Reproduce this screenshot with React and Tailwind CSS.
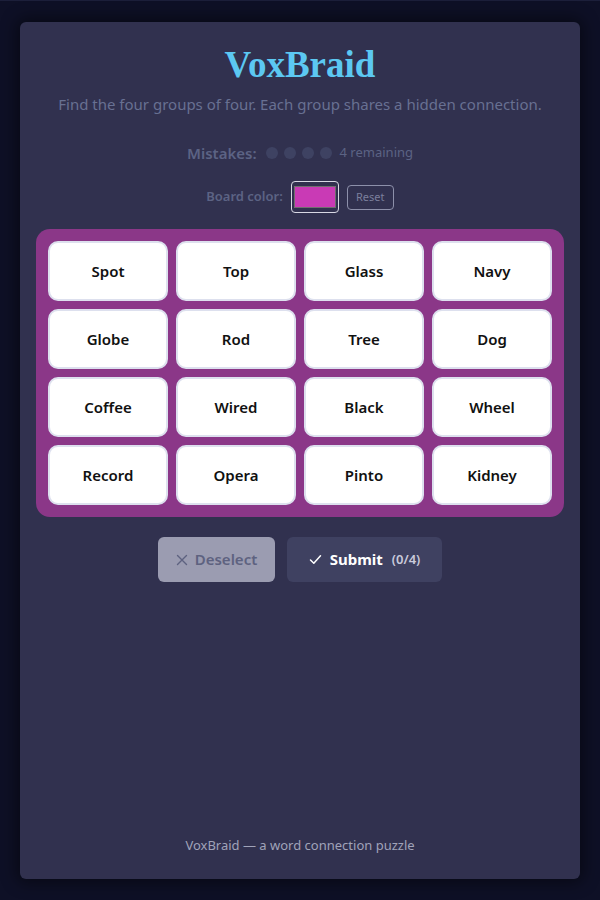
import React from "react";

const WORDS = [
  "Spot", "Top", "Glass", "Navy",
  "Globe", "Rod", "Tree", "Dog",
  "Coffee", "Wired", "Black", "Wheel",
  "Record", "Opera", "Pinto", "Kidney",
];

const sans = { fontFamily: '"Noto Sans", "Open Sans", sans-serif' };

export default function App() {
  return (
    <div className="min-h-[900px] bg-[#0e1026] p-5 pt-[21px] border-t border-[#1c1f3a]" style={sans}>
      <div className="h-[857px] rounded-md bg-[#31314f] shadow-[0_0_16px_4px_rgba(0,0,0,0.45)] flex flex-col items-center px-4 pt-[21px] pb-[24px]">
        <h1
          className="text-[37px] leading-[44px] font-bold text-[#5cc8f2]"
          style={{ fontFamily: '"Liberation Serif", "DejaVu Serif", serif' }}
        >
          VoxBraid
        </h1>
        <p className="mt-[6px] text-[15px] leading-[22px] text-[#687092]">
          Find the four groups of four. Each group shares a hidden connection.
        </p>

        <div className="mt-[28px] flex items-center h-[20px]">
          <span className="text-[15px] font-semibold text-[#5c6384]">Mistakes:</span>
          <div className="ml-[9px] flex gap-[6px]">
            {[0, 1, 2, 3].map((i) => (
              <span key={i} className="w-[12px] h-[12px] rounded-full bg-[#3e4262]" />
            ))}
          </div>
          <span className="ml-[8px] text-[13px] text-[#5c6384]">4 remaining</span>
        </div>

        <div className="mt-[18px] flex items-center h-[32px]">
          <span className="text-[13px] font-semibold text-[#5c6384]">Board color:</span>
          <div className="ml-[8px] w-[48px] h-[32px] rounded-[4px] border border-[#d8d8e4] flex items-center justify-center">
            <div className="w-[42px] h-[22px] bg-[#c93ab5] border border-[#6f6f6f]" />
          </div>
          <button className="ml-[8px] w-[47px] h-[25px] rounded-[4px] border border-[#8d90aa] text-[11px] text-[#7b7f9c]">
            Reset
          </button>
        </div>

        <div className="mt-[16px] w-[528px] rounded-[14px] bg-[#8b3788] p-3 grid grid-cols-4 gap-2">
          {WORDS.map((w) => (
            <button
              key={w}
              className="h-[60px] rounded-[10px] bg-white border-2 border-[#dde0ee] text-[15px] font-semibold text-[#111]"
            >
              {w}
            </button>
          ))}
        </div>

        <div className="mt-[20px] flex gap-3">
          <button className="w-[117px] h-[45px] rounded-[6px] bg-[#9b9cb1] flex items-center justify-center gap-[7px] text-[15px] font-semibold text-[#5e6280]">
            <svg width="12" height="12" viewBox="0 0 12 12" fill="none" stroke="currentColor" strokeWidth="1.4" strokeLinecap="round">
              <path d="M1.5 1.5 L10.5 10.5 M10.5 1.5 L1.5 10.5" />
            </svg>
            Deselect
          </button>
          <button className="w-[155px] h-[45px] rounded-[6px] bg-[#3f4161] flex items-center justify-center text-white">
            <svg width="13" height="11" viewBox="0 0 13 11" fill="none" stroke="currentColor" strokeWidth="1.5" strokeLinecap="round" strokeLinejoin="round">
              <path d="M1.5 6 L4.8 9.2 L11.5 1.8" />
            </svg>
            <span className="ml-[8px] text-[15px] font-bold">Submit</span>
            <span className="ml-[9px] text-[13px] font-semibold text-[#c9cadb]">(0/4)</span>
          </button>
        </div>

        <div className="mt-auto text-[13px] text-[#a0a3b9]">VoxBraid — a word connection puzzle</div>
      </div>
    </div>
  );
}
